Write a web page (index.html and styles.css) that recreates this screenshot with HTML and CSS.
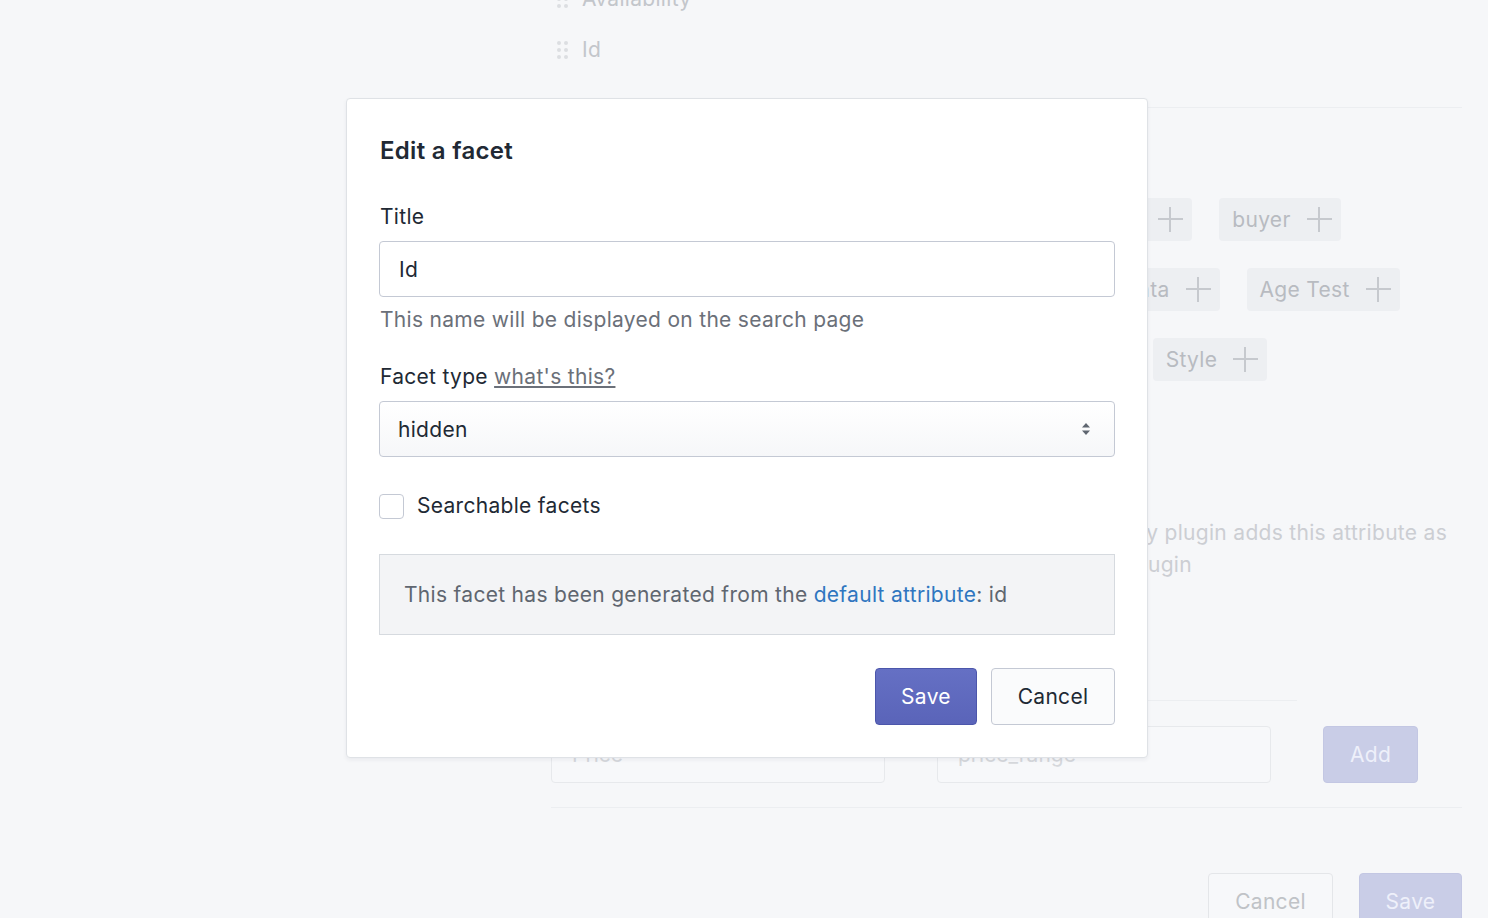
FILE: index.html
```html
<!DOCTYPE html>
<html lang="en">

<head>
    <meta charset="UTF-8">
    <meta name="viewport" content="width=device-width, initial-scale=1.0">
    <title>Facets - Search settings</title>
    <link rel="stylesheet" href="styles.css">
</head>

<body>
    <!-- Settings page (behind the dialog) -->
    <div class="page">
        <ul class="sort-list">
            <li><span class="grip"><i></i><i></i><i></i><i></i><i></i><i></i></span>Availability</li>
            <li><span class="grip"><i></i><i></i><i></i><i></i><i></i><i></i></span>Id</li>
        </ul>

        <hr class="divider divider-top">

        <!-- Available attributes -->
        <div class="chips">
            <div class="chip-row">
                <span class="chip">Colors <b class="plus"></b></span>
                <span class="chip">Tags <b class="plus"></b></span>
                <span class="chip">Manufacturer <b class="plus"></b></span>
                <span class="chip">seller <b class="plus"></b></span>
                <span class="chip">buyer <b class="plus"></b></span>
            </div>
            <div class="chip-row">
                <span class="chip">Label <b class="plus"></b></span>
                <span class="chip">Vendor <b class="plus"></b></span>
                <span class="chip">Categories <b class="plus"></b></span>
                <span class="chip">Metadata <b class="plus"></b></span>
                <span class="chip">Age Test <b class="plus"></b></span>
            </div>
            <div class="chip-row">
                <span class="chip">Gender <b class="plus"></b></span>
                <span class="chip">Sleeve <b class="plus"></b></span>
                <span class="chip">Fit <b class="plus"></b></span>
                <span class="chip">Pattern <b class="plus"></b></span>
                <span class="chip">Style <b class="plus"></b></span>
            </div>
        </div>

        <p class="note">
            Attributes without a facet stay hidden from shoppers. Every plugin adds this attribute as<br>
            a facet automatically as soon as you install and start the plugin
        </p>

        <!-- Custom facet form -->
        <div class="custom-facet">
            <div class="custom-head"></div>
            <div class="custom-row">
                <input class="field" type="text" placeholder="Price">
                <input class="field" type="text" placeholder="price_range">
                <button class="btn btn-faded">Add</button>
            </div>
        </div>

        <hr class="divider divider-bottom">

        <div class="page-actions">
            <button class="btn btn-ghost">Cancel</button>
            <button class="btn btn-faded">Save</button>
        </div>
    </div>

    <!-- Edit dialog -->
    <div class="backdrop">
        <div class="modal">
            <h2>Edit a facet</h2>

            <label class="label" for="title">Title</label>
            <input class="input" id="title" type="text" value="Id">
            <p class="help">This name will be displayed on the search page</p>

            <div class="label label-type">Facet type <a href="#" class="muted-link">what's this?</a></div>
            <div class="select">
                <span>hidden</span>
                <svg width="10" height="16" viewBox="0 0 10 16">
                    <path d="M5 2 L9 6.5 H1 Z" fill="#5f6670"/>
                    <path d="M5 14 L9 9.5 H1 Z" fill="#5f6670"/>
                </svg>
            </div>

            <label class="check">
                <span class="box"></span>
                Searchable facets
            </label>

            <div class="info">This facet has been generated from the <a href="#">default attribute</a>: id</div>

            <div class="actions">
                <button class="btn btn-primary">Save</button>
                <button class="btn btn-secondary">Cancel</button>
            </div>
        </div>
    </div>
</body>

</html>
```

FILE: styles.css
```css
/* Base */
body, html {
    margin: 0;
    padding: 0;
    font-family: Inter, 'Noto Sans', sans-serif;
    background-color: #f6f7f9;
    overflow: hidden;
    height: 918px;
}

/* Page behind the dialog, drawn faded */
.page {
    margin-left: 551px;
    width: 911px;
    color: #c3c6cb;
    font-size: 21px;
    letter-spacing: 0.3px;
}

.sort-list {
    list-style: none;
    margin: -27px 0 0;
    padding: 0;
}

.sort-list li {
    display: flex;
    align-items: center;
    height: 51px;
    padding-left: 6px;
}

.grip {
    display: grid;
    grid-template-columns: 4px 4px;
    gap: 3px;
    margin-right: 14px;
}

.grip i {
    display: block;
    width: 4px;
    height: 4px;
    border-radius: 50%;
    background: #dcdee2;
}

.divider {
    border: 0;
    border-top: 1px solid #eceef1;
    margin: 0;
}

.divider-top {
    margin-top: 32px;
}

.divider-bottom {
    margin-top: 24px;
}

.chips {
    padding-top: 90px;
    display: flex;
    flex-direction: column;
    gap: 27px;
}

.chip-row {
    display: flex;
    gap: 27px;
}

.chip {
    display: inline-flex;
    align-items: center;
    height: 43px;
    padding: 0 9px 0 13px;
    background: #edeff2;
    border-radius: 4px;
    color: #b8bbc1;
    white-space: nowrap;
}

.plus {
    position: relative;
    width: 25px;
    height: 25px;
    margin-left: 16px;
}

.plus::before, .plus::after {
    content: '';
    position: absolute;
    background: #c6c9ce;
}

.plus::before {
    left: 0;
    top: 11px;
    width: 25px;
    height: 2px;
}

.plus::after {
    left: 11px;
    top: 0;
    width: 2px;
    height: 25px;
}

.note {
    margin: 136px 0 0;
    line-height: 32px;
    color: #ccced3;
    white-space: nowrap;
}

.custom-facet {
    margin-top: 119px;
}

.custom-head {
    width: 746px;
    border-bottom: 1px solid #eceef1;
}

.custom-row {
    display: flex;
    align-items: center;
    margin-top: 25px;
}

.field {
    width: 334px;
    height: 57px;
    box-sizing: border-box;
    border: 1px solid #e7e9ec;
    border-radius: 4px;
    background: #f7f8fa;
    padding: 0 20px;
    font: inherit;
    font-size: 21px;
    margin-right: 52px;
}

.field::placeholder {
    color: #d6d8dc;
}

.page-actions {
    display: flex;
    justify-content: flex-end;
    gap: 26px;
    margin-top: 65px;
}

/* Buttons */
.btn {
    height: 57px;
    box-sizing: border-box;
    border-radius: 4px;
    font-family: inherit;
    font-size: 21px;
    letter-spacing: 0.3px;
    padding: 0 26px;
    cursor: pointer;
}

.btn-faded {
    background: #c9cde7;
    border: 1px solid #c3c7e3;
    color: #eef0fa;
}

.custom-row .btn-faded {
    width: 95px;
    padding: 0;
}

.page-actions .btn-faded {
    width: 103px;
    padding: 0;
}

.btn-ghost {
    width: 125px;
    padding: 0;
    background: #f7f8fa;
    border: 1px solid #e4e6e9;
    color: #c0c3c7;
}

/* Dialog */
.backdrop {
    position: absolute;
    inset: 0;
}

.modal {
    position: absolute;
    left: 346px;
    top: 98px;
    width: 802px;
    box-sizing: border-box;
    padding: 33px 32px 32px;
    background: #fff;
    border: 1px solid #dfe2e6;
    border-radius: 4px;
    box-shadow: 0 2px 4px rgba(30, 40, 60, 0.06);
    display: flex;
    flex-direction: column;
    color: #212934;
    font-size: 21px;
    letter-spacing: 0.3px;
}

.modal h2 {
    margin: 0 0 0 1px;
    font-size: 24px;
    line-height: 38px;
    font-weight: 600;
    letter-spacing: 0.3px;
}

.label {
    display: block;
    line-height: 30px;
    margin: 32px 0 9px 1px;
}

.label-type {
    margin-top: 27px;
}

.muted-link {
    color: #6b7079;
    text-decoration: underline;
}

.input {
    height: 56px;
    box-sizing: border-box;
    border: 1px solid #c4c9d4;
    border-radius: 4px;
    padding: 0 19px;
    font: inherit;
    letter-spacing: 0.3px;
    color: #212934;
}

.help {
    margin: 8px 0 0 1px;
    line-height: 30px;
    color: #6b7079;
}

.select {
    display: flex;
    align-items: center;
    justify-content: space-between;
    height: 56px;
    box-sizing: border-box;
    border: 1px solid #c4c9d4;
    border-radius: 4px;
    padding: 0 23px 0 18px;
    background: linear-gradient(#ffffff, #f6f7f9);
}

.check {
    display: flex;
    align-items: center;
    gap: 13px;
    margin-top: 34px;
    line-height: 30px;
}

.box {
    width: 25px;
    height: 25px;
    box-sizing: border-box;
    border: 1px solid #c4c9d4;
    border-radius: 4px;
    background: #fff;
}

.info {
    margin-top: 33px;
    height: 81px;
    box-sizing: border-box;
    padding: 0 24px;
    line-height: 79px;
    background: #f3f4f6;
    border: 1px solid #d6dadf;
    color: #5f6670;
    white-space: nowrap;
}

.info a {
    color: #2f76c0;
    text-decoration: none;
}

.actions {
    display: flex;
    justify-content: flex-end;
    gap: 14px;
    margin-top: 33px;
}

.btn-primary {
    width: 102px;
    padding: 0;
    background: linear-gradient(#6570c4, #5a64b9);
    border: 1px solid #4c56ab;
    color: #fff;
}

.btn-secondary {
    width: 124px;
    padding: 0;
    background: #fafbfc;
    border: 1px solid #c4c9d4;
    color: #212934;
}
```
